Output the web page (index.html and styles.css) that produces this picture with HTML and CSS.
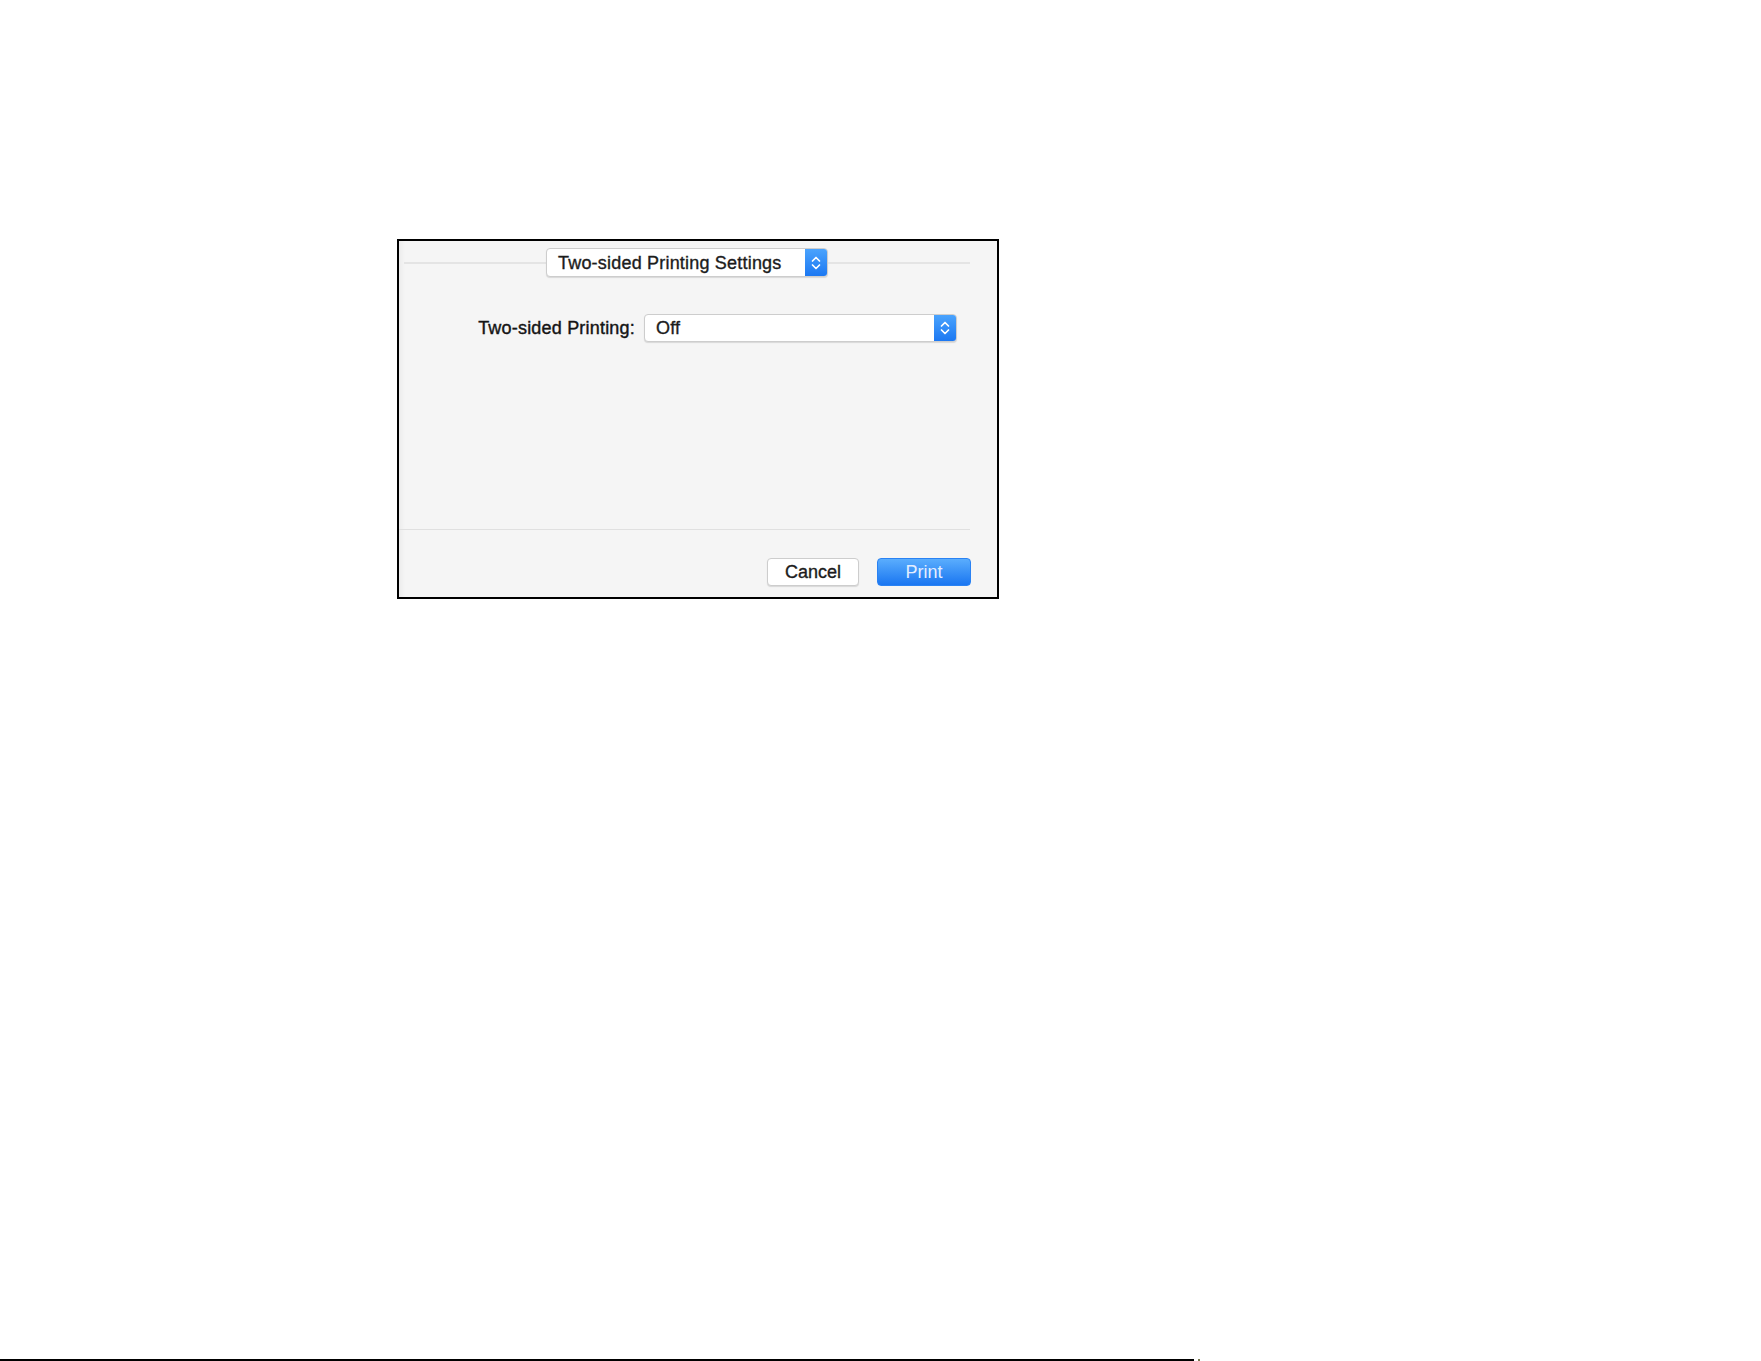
FILE: index.html
```html
<!DOCTYPE html>
<html lang="en">
<head>
    <meta charset="UTF-8">
    <meta name="viewport" content="width=device-width, initial-scale=1.0">
    <title>Two-sided Printing Settings</title>
    <link rel="stylesheet" href="styles.css">
</head>
<body>
    <div class="dialog">
        <div class="top">
            <span class="line"></span>
            <div class="popup popup-panel">
                <span class="popup-text">Two-sided Printing Settings</span>
                <span class="stepper">
                    <svg width="12" height="18" viewBox="0 0 12 18">
                        <path d="M2.5 7 L6 3.5 L9.5 7 M2.5 11 L6 14.5 L9.5 11" fill="none" stroke="#fff" stroke-width="1.7" stroke-linecap="round" stroke-linejoin="round"/>
                    </svg>
                </span>
            </div>
            <span class="line"></span>
        </div>

        <div class="field">
            <label class="field-label" for="twoSided">Two-sided Printing:</label>
            <div class="popup popup-wide" id="twoSided">
                <span class="popup-text">Off</span>
                <span class="stepper">
                    <svg width="12" height="18" viewBox="0 0 12 18">
                        <path d="M2.5 7 L6 3.5 L9.5 7 M2.5 11 L6 14.5 L9.5 11" fill="none" stroke="#fff" stroke-width="1.7" stroke-linecap="round" stroke-linejoin="round"/>
                    </svg>
                </span>
            </div>
        </div>

        <div class="divider"></div>

        <div class="buttons">
            <button class="btn btn-cancel" type="button">Cancel</button>
            <button class="btn btn-print" type="button">Print</button>
        </div>
    </div>

    <div class="page-rule"><span class="rule-mark"></span></div>
</body>
</html>
```

FILE: styles.css
```css
body {
    margin: 0;
    background-color: #fff;
    font-family: "Liberation Sans", Arial, sans-serif;
    color: #1c1c1c;
}
.dialog {
    box-sizing: border-box;
    width: 602px;
    height: 360px;
    margin: 239px 0 0 397px;
    border: 2px solid #000;
    background-color: #f5f5f5;
    background-image: linear-gradient(to right, #ececec 0, #f5f5f5 6px);
    display: flex;
    flex-direction: column;
}
.top {
    display: flex;
    align-items: center;
    margin-top: 7px;
    padding: 0 27px 0 5px;
}
.line {
    flex: 1;
    height: 2px;
    background-color: #e4e4e4;
}
.popup {
    box-sizing: border-box;
    display: flex;
    align-items: stretch;
    background-color: #fff;
    border: 1px solid #cdcdcd;
    border-radius: 4px;
    box-shadow: 0 1px 1px rgba(0, 0, 0, 0.12);
    overflow: hidden;
}
.popup-panel {
    width: 282px;
    height: 29px;
}
.popup-wide {
    width: 313px;
    height: 28px;
}
.popup-text {
    flex: 1;
    display: flex;
    align-items: center;
    padding: 1px 0 0 11px;
    font-size: 18px;
    letter-spacing: 0.2px;
    color: #1c1c1c;
    -webkit-text-stroke: 0.35px #1c1c1c;
}
.stepper {
    width: 22px;
    display: flex;
    align-items: center;
    justify-content: center;
    background: linear-gradient(#4aa3fd, #1c78f2);
}
.field {
    display: flex;
    align-items: center;
    justify-content: flex-end;
    gap: 9px;
    margin-top: 37px;
    padding-right: 40px;
}
.field-label {
    font-size: 18px;
    letter-spacing: 0.2px;
    color: #141414;
    -webkit-text-stroke: 0.4px #141414;
}
.divider {
    height: 1px;
    margin: 187px 27px 0 0;
    background-color: #e0e0e0;
}
.buttons {
    display: flex;
    justify-content: flex-end;
    gap: 18px;
    margin-top: 28px;
    padding-right: 26px;
}
.btn {
    box-sizing: border-box;
    height: 28px;
    font-family: "Liberation Sans", Arial, sans-serif;
    font-size: 18px;
    border-radius: 4px;
    padding: 0;
}
.btn-cancel {
    width: 92px;
    background-color: #fff;
    color: #1c1c1c;
    -webkit-text-stroke: 0.35px #1c1c1c;
    border: 1px solid #cdcdcd;
    box-shadow: 0 1px 1px rgba(0, 0, 0, 0.12);
}
.btn-print {
    width: 94px;
    color: #e4eeff;
    border: 1px solid #2a82f3;
    background: linear-gradient(#5aadfd, #1a76f1);
}
.page-rule {
    position: relative;
    width: 1194px;
    height: 2px;
    margin-top: 760px;
    background-color: #000;
}
.rule-mark {
    position: absolute;
    left: 1198px;
    top: 0;
    width: 2px;
    height: 2px;
    background-color: #7a7a50;
}
```
